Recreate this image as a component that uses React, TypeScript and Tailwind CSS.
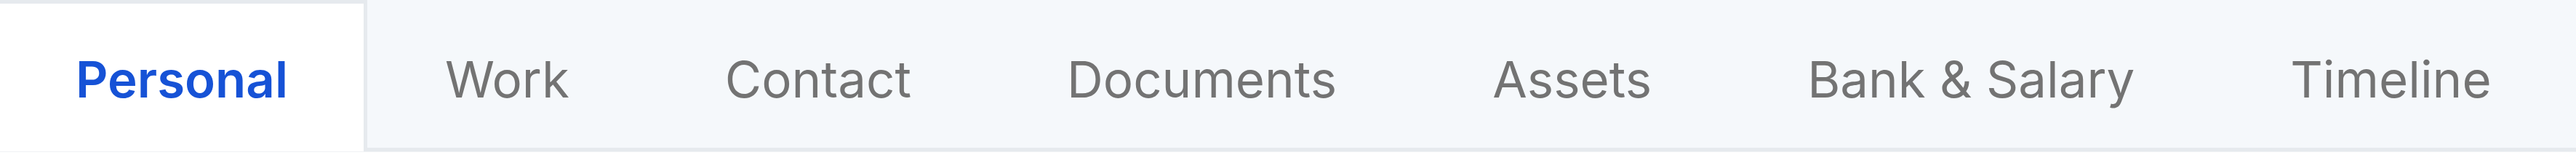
import React from "react";

const tabs = ["Personal", "Work", "Contact", "Documents", "Assets", "Bank & Salary", "Timeline"];

export default function App() {
  return (
    <div className="w-[3542px] h-[224px] bg-white overflow-hidden" style={{ fontFamily: "Inter, 'Noto Sans', sans-serif" }}>
      <div className="flex h-[209px] border-b border-[#f0f2f4] bg-[#f5f8fb]">
        {tabs.map((t, i) =>
          i === 0 ? (
            <button
              key={t}
              className="flex items-center h-full pt-[5px] px-[104px] bg-white border-t-[5px] border-r-[5px] border-[#e6eaee] text-[69px] leading-none font-semibold text-[#1652d6] whitespace-nowrap"
            >
              {t}
            </button>
          ) : (
            <button
              key={t}
              className="flex items-center h-full pt-[15px] px-[107px] border-b-[5px] border-[#e6eaee] text-[69px] leading-none font-normal text-[#737373] whitespace-nowrap"
            >
              {t}
            </button>
          )
        )}
        <div className="flex-1 h-full border-b-[5px] border-[#e6eaee]" />
      </div>
    </div>
  );
}
